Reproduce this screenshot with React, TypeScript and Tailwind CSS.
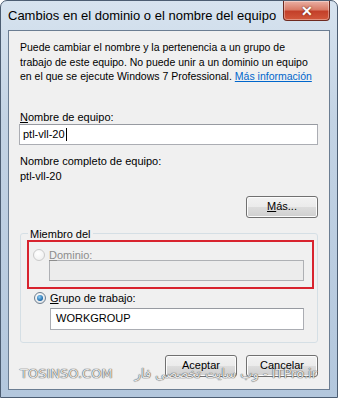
import React from "react";

const btn =
  "flex h-[22px] w-[72px] items-center justify-center rounded-[3px] border border-[#707070] bg-[linear-gradient(#f2f2f2_0%,#ebebeb_50%,#dddddd_50%,#cfcfcf_100%)] text-[11px] text-black shadow-[inset_0_0_0_1px_#fcfcfc]";

function Radio({ checked, disabled }: { checked?: boolean; disabled?: boolean }) {
  return (
    <span
      className={
        disabled
          ? "flex h-[12px] w-[12px] items-center justify-center rounded-full border border-[#cacaca] bg-[radial-gradient(circle_at_40%_35%,#ffffff,#ececec)]"
          : "flex h-[12px] w-[12px] items-center justify-center rounded-full border border-[#6f7f8f] bg-[radial-gradient(circle_at_40%_35%,#ffffff,#d8dde2)]"
      }
    >
      {checked && (
        <span className="h-[6px] w-[6px] rounded-full bg-[radial-gradient(circle_at_40%_35%,#8fd0f7,#1b67a8_70%,#0d4f88)]" />
      )}
    </span>
  );
}

export default function App() {
  return (
    <div
      className="relative h-[398px] w-[338px] overflow-hidden rounded-t-[7px] border border-[#4c5d72] bg-[linear-gradient(180deg,#d7e3ef_0%,#c3d3e4_30%,#b3c7dd_100%)] text-black"
      style={{ fontFamily: '"Liberation Sans", Arial, sans-serif' }}
    >
      {/* title bar */}
      <div className="flex h-[29px] items-start justify-between pl-[7px] pr-[7px]">
        <span className="pt-[7px] text-[13px] leading-[15px] text-black">
          Cambios en el dominio o el nombre del equipo
        </span>
        <div className="flex h-[20px] w-[47px] items-center justify-center rounded-b-[4px] border border-t-0 border-[#6e2a20] bg-[linear-gradient(180deg,#eab0a4_0%,#d97c68_45%,#c4402a_55%,#d2583c_100%)] shadow-[inset_0_0_0_1px_rgba(255,255,255,0.35)]">
          <span className="text-[14px] font-bold leading-none text-white [text-shadow:0_0_2px_#5a1a10]">
            ✕
          </span>
        </div>
      </div>

      {/* client area */}
      <div className="mx-[7px] h-[360px] border border-[#6b7d92] bg-[#f0f0f0] pl-[10px] pr-[11px] pt-[9px] text-[11px] leading-[14.5px]">
        <p className="pl-[1px] pr-[4px] text-[10.5px]">
          Puede cambiar el nombre y la pertenencia a un grupo de trabajo de este equipo. No
          puede unir a un dominio un equipo en el que se ejecute Windows 7 Professional.{" "}
          <span className="text-[#0066cc] underline">Más información</span>
        </p>

        <div className="mt-[26px] pl-[1px] leading-[14px]">
          <span className="underline">N</span>ombre de equipo:
        </div>
        <div className="flex h-[21px] items-center border border-[#abadb3] border-t-[#979aa1] bg-white pl-[3px]">
          ptl-vll-20
          <span className="ml-[1px] h-[13px] w-px bg-black" />
        </div>

        <div className="mt-[9px] pl-[1px] leading-[14px]">Nombre completo de equipo:</div>
        <div className="mt-[1px] pl-[1px] leading-[14px]">ptl-vll-20</div>

        <div className="mt-[13px] flex justify-end">
          <div className={btn + " w-[71px]"}>
            <span>
              <span className="underline">M</span>ás...
            </span>
          </div>
        </div>

        <fieldset className="ml-[1px] mt-[9px] h-[116px] rounded-[3px] border border-[#d5dfe5] px-0 pt-0">
          <legend className="ml-[7px] px-[2px] leading-[14px]">Miembro del</legend>

          <div className="ml-[6px] mr-[3px] mt-[-1px] border-2 border-[#d8232e] pb-[6px] pt-[7px]">
            <div className="flex items-center leading-[12px] text-[#8d8d8d]">
              <span className="ml-[4px]">
                <Radio disabled />
              </span>
              <span className="ml-[4px]">
                <span className="underline">D</span>ominio:
              </span>
            </div>
            <div className="ml-[20px] mr-[8px] mt-[-1px] h-[21px] border border-[#aeb0b4] bg-[#ececec]" />
          </div>

          <div className="ml-[13px] mt-[3px] flex items-center leading-[12px]">
            <Radio checked />
            <span className="ml-[4px]">
              <span className="underline">G</span>rupo de trabajo:
            </span>
          </div>
          <div className="ml-[29px] mr-[13px] mt-[4px] flex h-[22px] items-center border border-[#abadb3] border-t-[#979aa1] bg-white pl-[5px]">
            WORKGROUP
          </div>
        </fieldset>

        <div className="mt-[12px] flex justify-end gap-[9px]">
          <div className={btn + " border-[#3c7fb1] bg-[linear-gradient(#eef8fe_0%,#e1f3fd_50%,#cdebfc_50%,#bde3f9_100%)] shadow-[inset_0_0_0_1px_#c6e6fb]"}>
            Aceptar
          </div>
          <div className={btn}>Cancelar</div>
        </div>
      </div>

      {/* watermark */}
      <div
        className="pointer-events-none absolute left-[19px] right-[20px] top-[365px] flex items-center justify-between whitespace-nowrap text-[13px] leading-[16px] text-[#e6e6e6] [text-shadow:0_0_1px_#444,0_0_1px_#444]"
        style={{ fontFamily: '"DejaVu Sans", sans-serif' }}
      >
        <span>TOSINSO.COM</span>
        <span dir="rtl">ITPro.ir - وب سایت تخصصی فار</span>
      </div>
    </div>
  );
}
